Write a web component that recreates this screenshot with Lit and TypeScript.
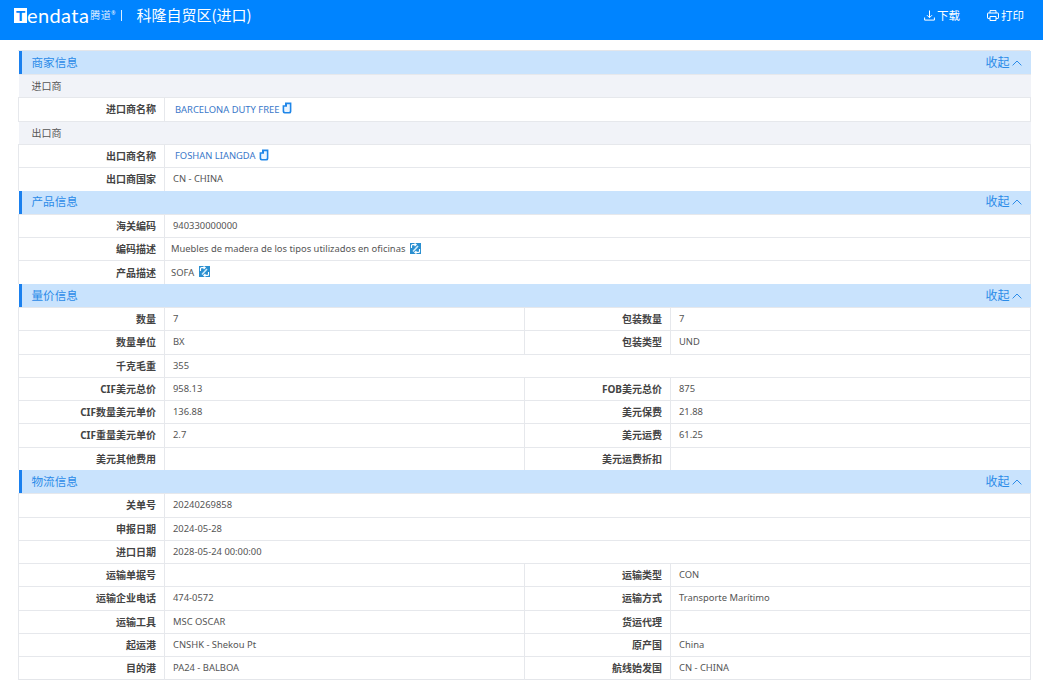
import { LitElement, html, css, nothing } from "lit";
import { customElement } from "lit/decorators.js";

type Cell = { l: string; v?: string; link?: boolean; copy?: boolean; tr?: boolean; shift?: boolean };
type Row = { sub?: string; cells?: Cell[] };
type Section = { title: string; rows: Row[] };

const c = (l: string, v = "", extra: Partial<Cell> = {}): Cell => ({ l, v, ...extra });

const SECTIONS: Section[] = [
  {
    title: "商家信息",
    rows: [
      { sub: "进口商" },
      { cells: [c("进口商名称", "BARCELONA DUTY FREE", { link: true, copy: true })] },
      { sub: "出口商" },
      { cells: [c("出口商名称", "FOSHAN LIANGDA", { link: true, copy: true })] },
      { cells: [c("出口商国家", "CN - CHINA")] },
    ],
  },
  {
    title: "产品信息",
    rows: [
      { cells: [c("海关编码", "940330000000")] },
      { cells: [c("编码描述", "Muebles de madera de los tipos utilizados en oficinas", { tr: true, shift: true })] },
      { cells: [c("产品描述", "SOFA", { tr: true, shift: true })] },
    ],
  },
  {
    title: "量价信息",
    rows: [
      { cells: [c("数量", "7"), c("包装数量", "7")] },
      { cells: [c("数量单位", "BX"), c("包装类型", "UND")] },
      { cells: [c("千克毛重", "355")] },
      { cells: [c("CIF美元总价", "958.13"), c("FOB美元总价", "875")] },
      { cells: [c("CIF数量美元单价", "136.88"), c("美元保费", "21.88")] },
      { cells: [c("CIF重量美元单价", "2.7"), c("美元运费", "61.25")] },
      { cells: [c("美元其他费用"), c("美元运费折扣")] },
    ],
  },
  {
    title: "物流信息",
    rows: [
      { cells: [c("关单号", "20240269858")] },
      { cells: [c("申报日期", "2024-05-28")] },
      { cells: [c("进口日期", "2028-05-24 00:00:00")] },
      { cells: [c("运输单据号"), c("运输类型", "CON")] },
      { cells: [c("运输企业电话", "474-0572"), c("运输方式", "Transporte Marítimo")] },
      { cells: [c("运输工具", "MSC OSCAR"), c("货运代理")] },
      { cells: [c("起运港", "CNSHK - Shekou Pt"), c("原产国", "China")] },
      { cells: [c("目的港", "PA24 - BALBOA"), c("航线始发国", "CN - CHINA")] },
    ],
  },
];

const copyIcon = html`<svg class="ico" width="10" height="12" viewBox="0 0 10 12" aria-hidden="true">
  <path d="M3 .4h6.4v9a2.2 2.2 0 0 1-2.2 2.2H2.6A2 2 0 0 1 .6 9.6V3.2H3z" fill="#1f86e8" />
  <path d="M5 2.2h2.8v6.9a.9.9 0 0 1-.9.9H3.2a1 1 0 0 1-1-1V4.8H5z" fill="#eaf4ff" />
</svg>`;

const trIcon = html`<svg class="tri" width="11" height="11" viewBox="0 0 11 11" aria-hidden="true">
  <rect width="11" height="11" fill="#2a8fd0" />
  <path d="M1.5 5V2.6A1 1 0 0 1 2.5 1.6H6M4.6.4 6.2 1.6 4.6 3" stroke="#fff" stroke-width="1.1" fill="none" />
  <path d="M9.5 6v2.4a1 1 0 0 1-1 1H5M6.4 8 4.8 9.4 6.4 10.6" stroke="#fff" stroke-width="1.1" fill="none" />
  <path d="M3 8.5 8 3" stroke="#cfeaf9" stroke-width="1.6" fill="none" />
</svg>`;

@customElement("app-root")
export class AppRoot extends LitElement {
  static styles = css`
    :host {
      display: block;
      font-family: "Noto Sans", "Noto Sans CJK SC", sans-serif;
      font-size: 10px;
      color: #444;
      background: #fff;
      height: 685px;
      overflow: hidden;
    }
    header {
      height: 40px;
      background: #0084ff;
      color: #fff;
      display: flex;
      align-items: flex-start;
      padding: 0 19px 0 14px;
      box-sizing: border-box;
    }
    .logo {
      display: flex;
      align-items: center;
      height: 30px;
    }
    .t {
      width: 13px;
      height: 15px;
      background: #fff;
      color: #0084ff;
      font: 700 15px/15px "Liberation Sans", sans-serif;
      text-align: center;
    }
    .endata {
      font: 400 20px/30px "Lato", sans-serif;
      letter-spacing: 0.4px;
    }
    .cn {
      font: 400 10px/30px "Noto Sans CJK SC", sans-serif;
      letter-spacing: 0.5px;
      margin-left: 1px;
      opacity: 0.85;
    }
    .reg {
      font: 400 5px/12px "Noto Sans", sans-serif;
      align-self: flex-start;
      margin-top: 7px;
    }
    .bar {
      width: 1px;
      height: 11px;
      background: #dbeeff;
      margin: 0 14px 0 6px;
    }
    h1 {
      margin: 0;
      font: 400 15px/30px "Noto Sans CJK SC", sans-serif;
    }
    .spacer {
      flex: 1;
    }
    .act {
      display: flex;
      align-items: center;
      gap: 2px;
      height: 30px;
      font: 400 11.5px/30px "Noto Sans CJK SC", sans-serif;
      margin-left: 27px;
    }
    main {
      padding: 10px 13px 0 18px;
    }
    .frame {
      width: 1012px;
      border-top: 1px solid #e4e6ea;
    }
    table {
      width: 1012px;
      border-collapse: collapse;
      table-layout: fixed;
      border-bottom: 1px solid #e4e6ea;
    }
    tr {
      height: 23.25px;
    }
    td {
      padding: 0;
      border-top: 1px solid #e6e8ec;
      vertical-align: middle;
      line-height: 14px;
      white-space: nowrap;
    }
    .head td {
      background: #c9e3fd;
      border-top: 0;
      color: #2b8be8;
    }
    .head-in {
      display: flex;
      justify-content: space-between;
      align-items: center;
      padding: 0 9px 0 10px;
      border-left: 3px solid #1a80ee;
      height: 23px;
      box-sizing: border-box;
    }
    .title {
      font-size: 11.6px;
    }
    .toggle {
      display: flex;
      align-items: center;
      gap: 2px;
      font-size: 12px;
    }
    .sub td {
      background: #f1f3f8;
      padding-left: 13px;
      color: #555;
    }
    .lab {
      text-align: right;
      padding-right: 8px;
      font-weight: 700;
      color: #444;
      border-left: 1px solid #e6e8ec;
    }
    .val {
      padding-left: 8px;
      border-left: 1px solid #e6e8ec;
      border-right: 1px solid #e6e8ec;
      color: #555;
      font-size: 9.4px;
    }
    .val.shift {
      padding-left: 6px;
    }
    .link {
      color: #3a78c9;
      padding-left: 2px;
    }
    .ico {
      vertical-align: -1.5px;
      margin-left: 3px;
    }
    .tri {
      vertical-align: -1.5px;
      margin-left: 5px;
    }
  `;

  private cell(x: Cell, span: number) {
    return html`<td class="lab">${x.l}</td>
      <td class="val ${x.shift ? "shift" : ""}" colspan=${span}>${x.link
          ? html`<span class="link">${x.v}</span>`
          : x.v}${x.copy ? copyIcon : nothing}${x.tr ? trIcon : nothing}</td>`;
  }

  render() {
    return html`
      <header>
        <div class="logo">
          <span class="t">T</span><span class="endata">endata</span><span class="cn">腾道</span><span class="reg">®</span><span class="bar"></span>
          <h1>科隆自贸区(进口)</h1>
        </div>
        <div class="spacer"></div>
        <div class="act">
          <svg width="11" height="11" viewBox="0 0 11 11" fill="none" stroke="#fff" stroke-width="1">
            <path d="M5.5 .5v7M3 5.2l2.5 2.5L8 5.2M.6 7.5v2.6h9.8V7.5" />
          </svg>
          下载
        </div>
        <div class="act">
          <svg width="12" height="11" viewBox="0 0 12 11" fill="none" stroke="#fff" stroke-width="1">
            <path d="M3 3V.6h6V3M3 8.4H1a.5.5 0 0 1-.5-.5V3.5A.5.5 0 0 1 1 3h10a.5.5 0 0 1 .5.5v4.4a.5.5 0 0 1-.5.5H9" />
            <path d="M3 6.5h6v4H3z" />
          </svg>
          打印
        </div>
      </header>
      <main>
        <div class="frame">
        <table>
          <colgroup>
            <col style="width:146px" /><col style="width:360px" /><col style="width:146px" /><col style="width:360px" />
          </colgroup>
          ${SECTIONS.map(
            (s) => html`
              <tr class="head">
                <td colspan="4">
                  <div class="head-in">
                    <span class="title">${s.title}</span>
                    <span class="toggle">收起
                      <svg width="10" height="6" viewBox="0 0 10 6" fill="none" stroke="#2b8be8" stroke-width="1">
                        <path d="M.6 5.4 5 1l4.4 4.4" />
                      </svg>
                    </span>
                  </div>
                </td>
              </tr>
              ${s.rows.map((r) =>
                r.sub
                  ? html`<tr class="sub"><td colspan="4">${r.sub}</td></tr>`
                  : html`<tr>
                      ${r.cells!.length === 1
                        ? this.cell(r.cells![0], 3)
                        : r.cells!.map((x) => this.cell(x, 1))}
                    </tr>`
              )}
            `
          )}
        </table>
        </div>
      </main>
    `;
  }
}
